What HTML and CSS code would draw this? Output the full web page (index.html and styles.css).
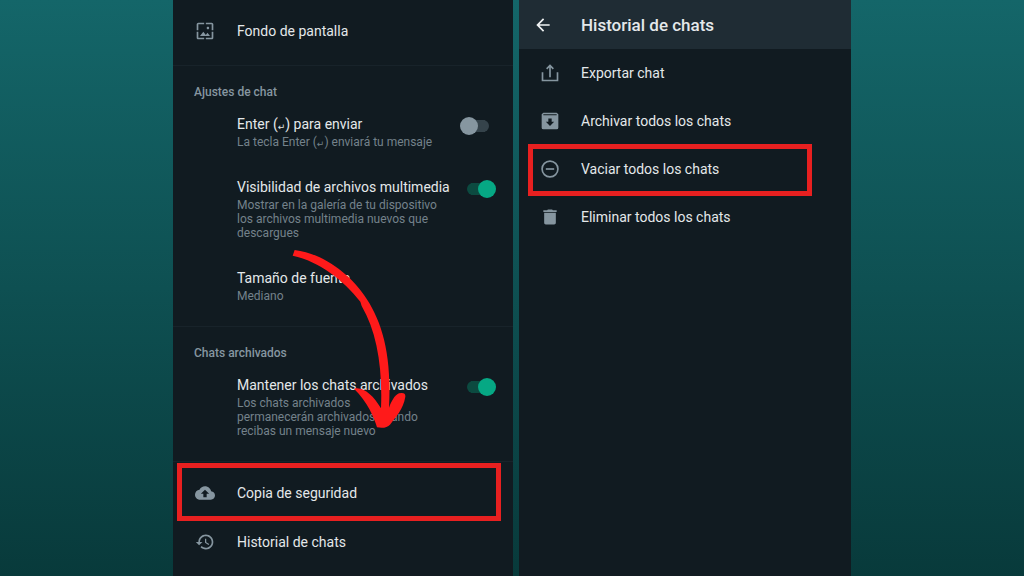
FILE: index.html
```html
<!DOCTYPE html>
<html lang="es">
<head>
    <meta charset="UTF-8">
    <meta name="viewport" content="width=device-width, initial-scale=1.0">
    <title>Historial de chats</title>
    <link rel="stylesheet" href="styles.css">
</head>
<body>
    <main class="stage">
        <!-- Chat settings -->
        <section class="panel settings">
            <div class="group">
                <button type="button" class="row">
                    <svg class="icon" viewBox="0 0 24 24"><path d="M4 4h7V2H4c-1.100 0-2 .9-2 2v7h2V4zm6 9l-4 5h12l-3-4-2.030 2.710L10 13zm7-4.500c0-.83-.67-1.500-1.500-1.500S14 7.670 14 8.500s.67 1.500 1.500 1.500S17 9.330 17 8.500zM20 2h-7v2h7v7h2V4c0-1.100-.9-2-2-2zm0 18h-7v2h7c1.100 0 2-.9 2-2v-7h-2v7zM4 13H2v7c0 1.100.9 2 2 2h7v-2H4v-7z"/></svg>
                    <span>Fondo de pantalla</span>
                </button>
            </div>

            <div class="group group-titled">
                <h2 class="group-title">Ajustes de chat</h2>
                <div class="option">
                    <div class="option-text">
                        <label class="option-name" for="enterSend">Enter (<span class="key">↵</span>) para enviar</label>
                        <p class="option-info">La tecla Enter (<span class="key">↵</span>) enviará tu mensaje</p>
                    </div>
                    <input type="checkbox" class="switch" id="enterSend">
                </div>
                <div class="option">
                    <div class="option-text">
                        <label class="option-name" for="mediaVisible">Visibilidad de archivos multimedia</label>
                        <p class="option-info">Mostrar en la galería de tu dispositivo<br>los archivos multimedia nuevos que<br>descargues</p>
                    </div>
                    <input type="checkbox" class="switch" id="mediaVisible" checked>
                </div>
                <div class="option">
                    <div class="option-text">
                        <h3 class="option-name">Tamaño de fuente</h3>
                        <p class="option-info">Mediano</p>
                    </div>
                </div>
            </div>

            <div class="group group-titled">
                <h2 class="group-title">Chats archivados</h2>
                <div class="option">
                    <div class="option-text">
                        <label class="option-name" for="keepArchived">Mantener los chats archivados</label>
                        <p class="option-info">Los chats archivados<br>permanecerán archivados cuando<br>recibas un mensaje nuevo</p>
                    </div>
                    <input type="checkbox" class="switch" id="keepArchived" checked>
                </div>
            </div>

            <div class="group">
                <button type="button" class="row marked">
                    <svg class="icon" viewBox="0 0 24 24"><path d="M19.350 10.040C18.670 6.590 15.640 4 12 4 9.110 4 6.600 5.640 5.350 8.040 2.340 8.360 0 10.910 0 14c0 3.310 2.690 6 6 6h13c2.760 0 5-2.240 5-5 0-2.640-2.050-4.780-4.650-4.960zM14 13v4h-4v-4H7l5-5 5 5h-3z"/></svg>
                    <span>Copia de seguridad</span>
                </button>
                <button type="button" class="row">
                    <svg class="icon" viewBox="0 0 24 24"><path d="M13 3c-4.970 0-9 4.030-9 9H1l3.890 3.890.07.14L9 12H6c0-3.870 3.130-7 7-7s7 3.130 7 7-3.130 7-7 7c-1.930 0-3.680-.79-4.940-2.060l-1.420 1.420C8.270 19.990 10.510 21 13 21c4.970 0 9-4.030 9-9s-4.030-9-9-9zm-1 5v5l4.280 2.540.72-1.210-3.500-2.080V8H12z"/></svg>
                    <span>Historial de chats</span>
                </button>
            </div>

            <svg class="arrow" viewBox="0 0 420 600" aria-hidden="true">
                <path d="M44 30C130 40 212 105 252 165C305 240 336 340 327 503C334 485 343 466 357 460Q377 455 376 470C370 508 348 530 330 554Q318 567 291 562C284 535 262 485 222 446C248 438 280 465 303 505C308 380 290 275 245 198L241 185C190 120 120 65 38 47Z"/>
            </svg>
        </section>

        <!-- Chat history -->
        <section class="panel history">
            <header class="topbar">
                <button type="button" class="back" aria-label="Atrás">
                    <svg class="icon" viewBox="0 0 24 24"><path d="M20 11H7.830l5.590-5.590L12 4l-8 8 8 8 1.410-1.410L7.830 13H20v-2z"/></svg>
                </button>
                <h1 class="topbar-title">Historial de chats</h1>
            </header>
            <button type="button" class="row">
                <svg class="icon icon-line" viewBox="0 0 24 24"><path d="M3 11v10h18V11M12 17V3M8 7l4-4 4 4"/></svg>
                <span>Exportar chat</span>
            </button>
            <button type="button" class="row">
                <svg class="icon" viewBox="0 0 24 24"><path fill-rule="evenodd" d="M4 2h16l2 2v16q0 2-2 2H4q-2 0-2-2V4zM4 4v1h16V4zM10 9v4H7l5 5 5-5h-3V9z"/></svg>
                <span>Archivar todos los chats</span>
            </button>
            <button type="button" class="row marked">
                <svg class="icon icon-line" viewBox="0 0 24 24"><circle cx="12" cy="12" r="9.500"/><path d="M7 12h10"/></svg>
                <span>Vaciar todos los chats</span>
            </button>
            <button type="button" class="row">
                <svg class="icon" viewBox="0 0 24 24"><path d="M5 19c0 1.100.9 2 2 2h10c1.100 0 2-.9 2-2V7H5v12zM20 4h-4.500l-1-1h-5l-1 1H4v2h16V4z"/></svg>
                <span>Eliminar todos los chats</span>
            </button>
        </section>
    </main>
</body>
</html>
```
FILE: styles.css
```css
* {
    box-sizing: border-box;
}

body {
    margin: 0;
    font-family: Roboto, "Liberation Sans", sans-serif;
    font-size: 14px;
    line-height: 20px;
    color: #e4e8ea;
    background: linear-gradient(#146669, #083a3b);
}

h1, h2, h3, p {
    margin: 0;
}

button {
    border: 0;
    padding: 0;
    background: none;
    color: inherit;
    font: inherit;
    text-align: left;
}

/* Two panels between equal side margins */
.stage {
    display: grid;
    grid-template-columns: 167fr 340fr 332fr 167fr;
    gap: 6px;
    min-height: 100vh;
}

.panel {
    position: relative;
    background-color: #111b21;
}

.settings {
    grid-column: 2;
}

.history {
    grid-column: 3;
}

/* Rows with an icon */
.row {
    position: relative;
    display: flex;
    align-items: center;
    gap: 22px;
    width: 100%;
    height: 49px;
    padding-left: 22px;
}

.icon {
    flex: none;
    width: 20px;
    height: 20px;
    fill: #8696a0;
}

.icon-line {
    fill: none;
    stroke: #8696a0;
    stroke-width: 2;
}

/* Setting groups */
.group {
    padding: 6px 0 10px;
}

.group + .group {
    border-top: 1px solid #18232a;
}

.group-titled {
    padding: 18px 0 9px;
}

.group-title {
    padding-left: 21px;
    font-size: 12px;
    font-weight: 500;
    line-height: 16px;
    color: #8696a0;
}

.option {
    display: flex;
    justify-content: space-between;
    align-items: flex-start;
    padding: 14px 17px 14px 64px;
}

.option-name {
    display: block;
    font-size: 14px;
    font-weight: 400;
    line-height: 20px;
}

.option-info {
    margin-top: 1px;
    font-size: 12px;
    line-height: 14px;
    color: #74828b;
}

.key {
    font-family: "DejaVu Sans", sans-serif;
    font-size: 9px;
    line-height: 1;
    vertical-align: -1px;
}

/* Switch: a short track with the thumb over one end */
.switch {
    appearance: none;
    display: flex;
    flex: none;
    align-items: center;
    width: 36px;
    height: 18px;
    margin: 3px 0 0;
    background: linear-gradient(#35434b, #35434b) center / 14px 12px no-repeat;
}

.switch::before {
    content: "";
    width: 18px;
    height: 18px;
    border-radius: 50%;
    background-color: #8696a0;
}

.switch::after {
    content: "";
    width: 11px;
    height: 12px;
    border-radius: 0 6px 6px 0;
    background-color: #35434b;
}

.switch:checked {
    flex-direction: row-reverse;
    background-image: linear-gradient(#0c4a40, #0c4a40);
}

.switch:checked::before {
    background-color: #06a884;
}

.switch:checked::after {
    border-radius: 6px 0 0 6px;
    background-color: #0c4a40;
}

/* Red marks */
.marked::after {
    content: "";
    position: absolute;
    inset: -5px 12px -4px 4px;
    border: 5px solid #e82020;
}

.history .marked::after {
    inset: -1px 39px -3px 9px;
}

.arrow {
    position: absolute;
    top: 240px;
    left: 107px;
    width: 140px;
    height: 200px;
    fill: #ff1a1a;
}

/* History panel */
.topbar {
    display: flex;
    align-items: center;
    gap: 28px;
    height: 49px;
    padding-left: 14px;
    background-color: #1f2c34;
}

.topbar-title {
    font-size: 17px;
    font-weight: 500;
    line-height: 24px;
}

.back {
    display: flex;
}

.back .icon {
    fill: #f0f3f4;
}

.history .row {
    gap: 21px;
    height: 48px;
    padding-left: 21px;
}
```
